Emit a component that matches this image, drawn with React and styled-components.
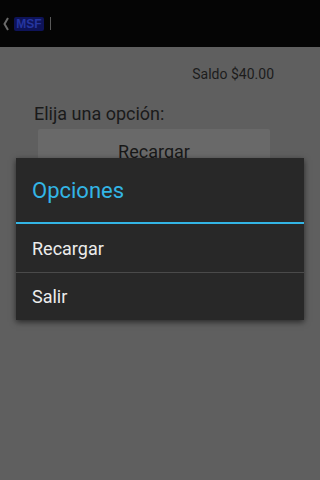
import styled, { createGlobalStyle } from 'styled-components';

const Global = createGlobalStyle`
  html, body {
    margin: 0;
    padding: 0;
    background: #5f5f5f;
    font-family: Roboto, "Noto Sans", sans-serif;
  }
`;

const options = ['Recargar', 'Salir'];

const App = () => {
  return (
    <S.Screen>
      <Global />
      <S.ActionBar>
        <S.Back>
          <svg width="6" height="14" viewBox="0 0 6 14">
            <path d="M5 1 L1.5 7 L5 13" stroke="#6b6b6b" strokeWidth="2" fill="none" />
          </svg>
        </S.Back>
        <S.Logo>MSF</S.Logo>
        <S.Separator />
      </S.ActionBar>
      <S.Content>
        <S.Balance>Saldo $40.00</S.Balance>
        <S.Label>Elija una opción:</S.Label>
        <S.Button>Recargar</S.Button>
      </S.Content>
      <S.Dialog>
        <S.Title>Opciones</S.Title>
        <S.List>
          {options.map((opt) => (
            <S.Item key={opt}>{opt}</S.Item>
          ))}
        </S.List>
      </S.Dialog>
    </S.Screen>
  );
};

const S = {
  Screen: styled.div`
    position: relative;
    width: 320px;
    height: 480px;
    background: #5f5f5f;
    overflow: hidden;
  `,
  ActionBar: styled.div`
    height: 47px;
    background: #050505;
    display: flex;
    align-items: center;
    padding-left: 3px;
  `,
  Back: styled.div`
    display: flex;
    align-items: center;
    width: 10px;
  `,
  Logo: styled.div`
    width: 30px;
    height: 14px;
    background: #0e1358;
    color: #2536a0;
    font-family: "Liberation Sans", sans-serif;
    font-weight: bold;
    font-size: 12px;
    line-height: 14px;
    text-align: center;
    border-radius: 2px;
    margin-left: 1px;
  `,
  Separator: styled.div`
    width: 1px;
    height: 13px;
    background: #5a5a5a;
    margin-left: 6px;
  `,
  Content: styled.div`
    display: flex;
    flex-direction: column;
    padding: 18px 46px 0 34px;
  `,
  Balance: styled.div`
    align-self: flex-end;
    font-size: 14px;
    line-height: 18px;
    color: #1c1c1c;
  `,
  Label: styled.div`
    margin-top: 20px;
    font-size: 18px;
    line-height: 22px;
    color: #1a1a1a;
  `,
  Button: styled.div`
    margin: 4px 0 0 4px;
    width: 232px;
    height: 44px;
    background: #696969;
    border-radius: 2px;
    display: flex;
    align-items: center;
    justify-content: center;
    font-size: 18px;
    color: #181818;
  `,
  Dialog: styled.div`
    position: absolute;
    left: 16px;
    top: 158px;
    width: 288px;
    background: #282828;
    box-shadow: 0 2px 6px rgba(0, 0, 0, 0.6);
  `,
  Title: styled.div`
    height: 66px;
    display: flex;
    align-items: center;
    padding: 0 0 0 16px;
    box-sizing: border-box;
    font-size: 22px;
    color: #33b5e5;
    border-bottom: 2px solid #33b5e5;
  `,
  List: styled.div`
    display: flex;
    flex-direction: column;
  `,
  Item: styled.div`
    height: 48px;
    display: flex;
    align-items: center;
    padding-left: 16px;
    font-size: 18px;
    color: #ececec;
    & + & {
      border-top: 1px solid #4a4a4a;
      height: 47px;
    }
  `,
};

export default App;
